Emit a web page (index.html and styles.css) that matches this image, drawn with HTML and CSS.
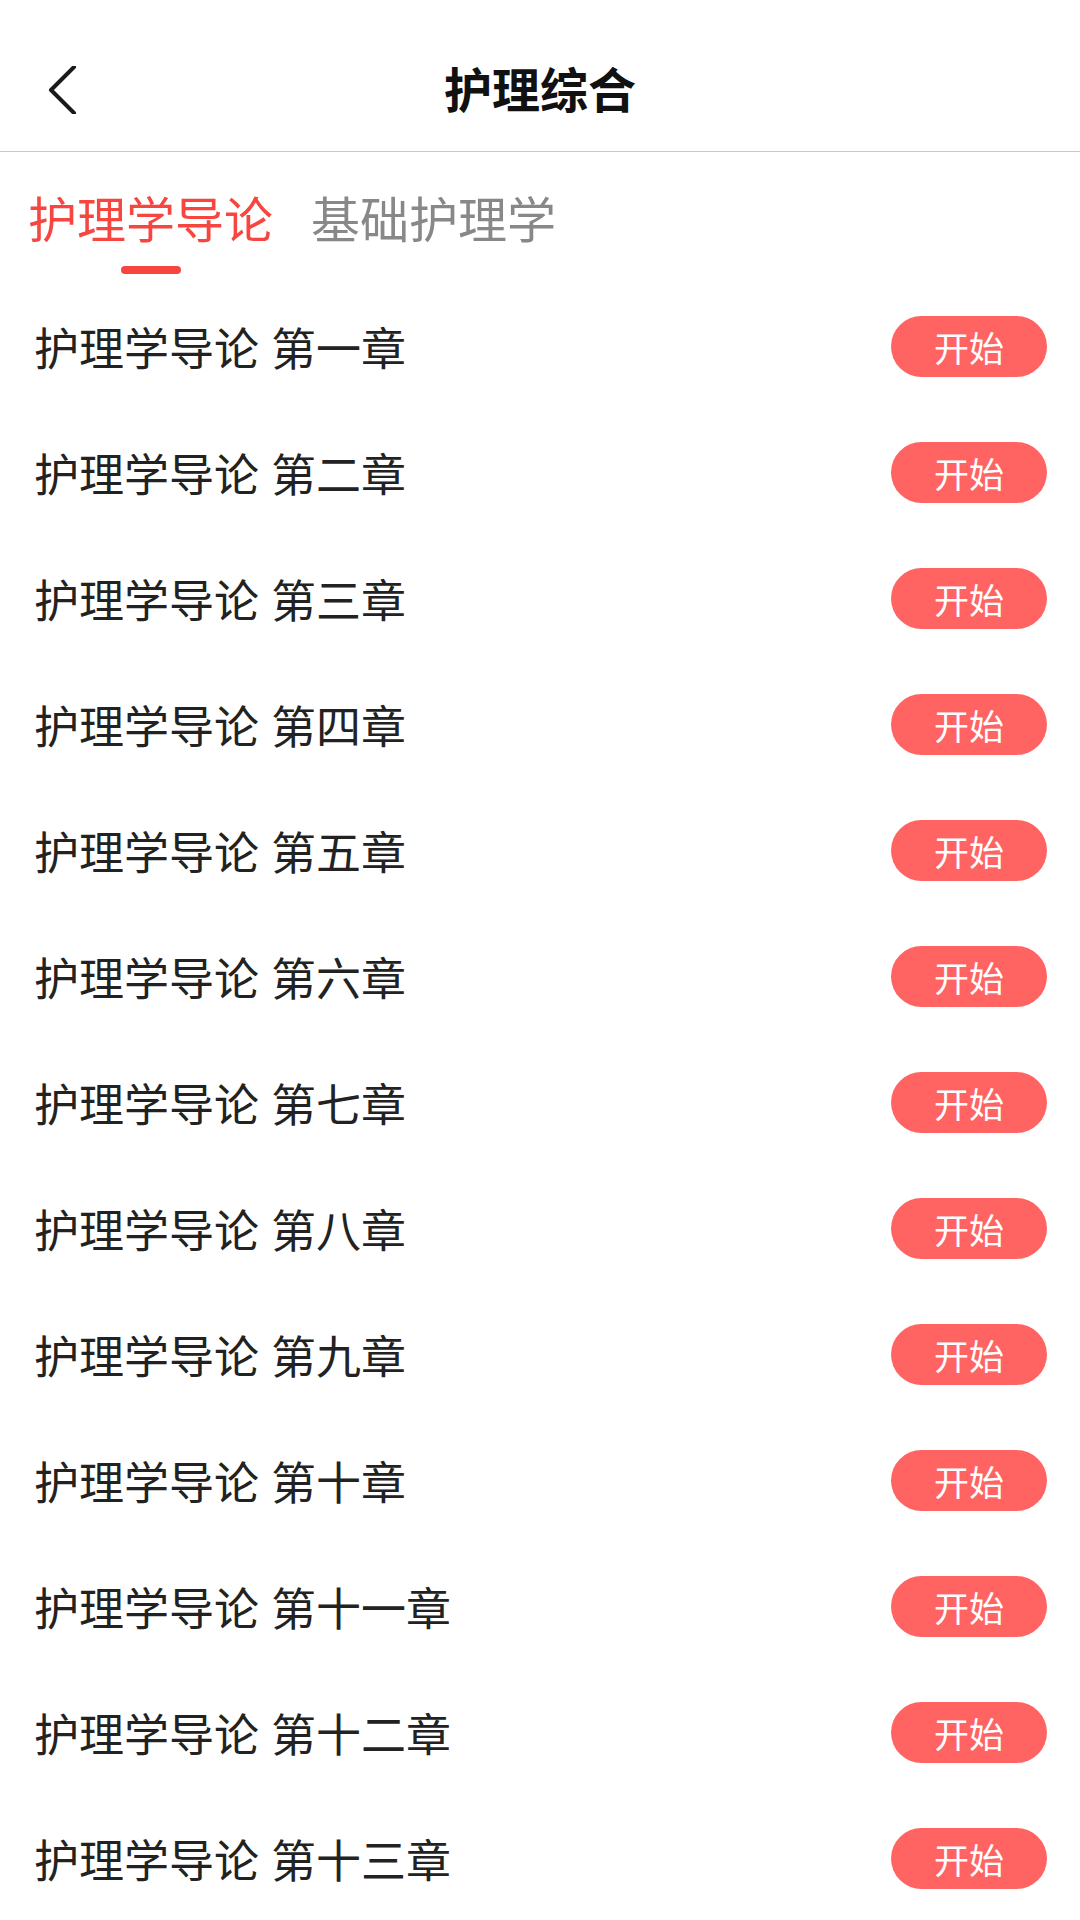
FILE: index.html
```html
<!DOCTYPE html>
<html>
<head>
    <meta charset="utf-8">
    <title>护理综合</title>
    <link rel="stylesheet" href="styles.css">
</head>
<body>
    <div class="header">
        <div class="toolbar">
            <div class="back">
                <svg width="48" height="48" viewBox="0 0 48 48">
                    <polyline points="34,1 11,24 34,47" fill="none" stroke="#1a1a1a" stroke-width="4" stroke-linecap="round" stroke-linejoin="round"/>
                </svg>
            </div>
            <div class="title">护理综合</div>
            <div></div>
        </div>
    </div>

    <div class="tabs">
        <div class="tab active">
            <span class="tab-text">护理学导论</span>
            <span class="indicator"></span>
        </div>
        <div class="tab">
            <span class="tab-text">基础护理学</span>
        </div>
    </div>

    <div class="list">
        <div class="row"><span class="name">护理学导论 第一章</span><button class="btn">开始</button></div>
        <div class="row"><span class="name">护理学导论 第二章</span><button class="btn">开始</button></div>
        <div class="row"><span class="name">护理学导论 第三章</span><button class="btn">开始</button></div>
        <div class="row"><span class="name">护理学导论 第四章</span><button class="btn">开始</button></div>
        <div class="row"><span class="name">护理学导论 第五章</span><button class="btn">开始</button></div>
        <div class="row"><span class="name">护理学导论 第六章</span><button class="btn">开始</button></div>
        <div class="row"><span class="name">护理学导论 第七章</span><button class="btn">开始</button></div>
        <div class="row"><span class="name">护理学导论 第八章</span><button class="btn">开始</button></div>
        <div class="row"><span class="name">护理学导论 第九章</span><button class="btn">开始</button></div>
        <div class="row"><span class="name">护理学导论 第十章</span><button class="btn">开始</button></div>
        <div class="row"><span class="name">护理学导论 第十一章</span><button class="btn">开始</button></div>
        <div class="row"><span class="name">护理学导论 第十二章</span><button class="btn">开始</button></div>
        <div class="row"><span class="name">护理学导论 第十三章</span><button class="btn">开始</button></div>
    </div>
</body>
</html>
```

FILE: styles.css
```css
body {
    margin: 0;
    background: #fff;
    font-family: "Noto Sans CJK SC", "Noto Sans", sans-serif;
    overflow: hidden;
}
.header {
    padding-top: 25px;
    border-bottom: 1px solid #c8c8c8;
}
.toolbar {
    height: 126px;
    display: grid;
    grid-template-columns: 1fr auto 1fr;
    align-items: center;
}
.back {
    padding-left: 40px;
    display: flex;
    align-items: center;
}
.back svg {
    display: block;
    margin-top: 3px;
}
.title {
    font-size: 48px;
    font-weight: bold;
    color: #111;
    line-height: 64px;
    margin-bottom: 3px;
}
.tabs {
    display: flex;
    gap: 38px;
    padding: 33px 0 10px 28px;
}
.tab {
    display: flex;
    flex-direction: column;
    align-items: center;
}
.tab-text {
    font-size: 49px;
    line-height: 64px;
    color: #888;
}
.tab.active .tab-text {
    color: #f6463f;
}
.indicator {
    width: 60px;
    height: 8px;
    margin-top: 17px;
    border-radius: 4px;
    background: #f6463f;
}
.row {
    height: 126px;
    display: flex;
    align-items: center;
    justify-content: space-between;
    padding: 0 33px 0 34px;
}
.name {
    font-size: 45px;
    color: #222;
    white-space: pre;
    word-spacing: 2px;
    margin-top: -2px;
}
.btn {
    width: 156px;
    height: 61px;
    border: none;
    border-radius: 31px;
    background: #ff6463;
    color: #fff;
    font-family: "Noto Sans CJK SC", sans-serif;
    font-size: 35px;
    padding: 0;
    margin-top: -1px;
}
```
